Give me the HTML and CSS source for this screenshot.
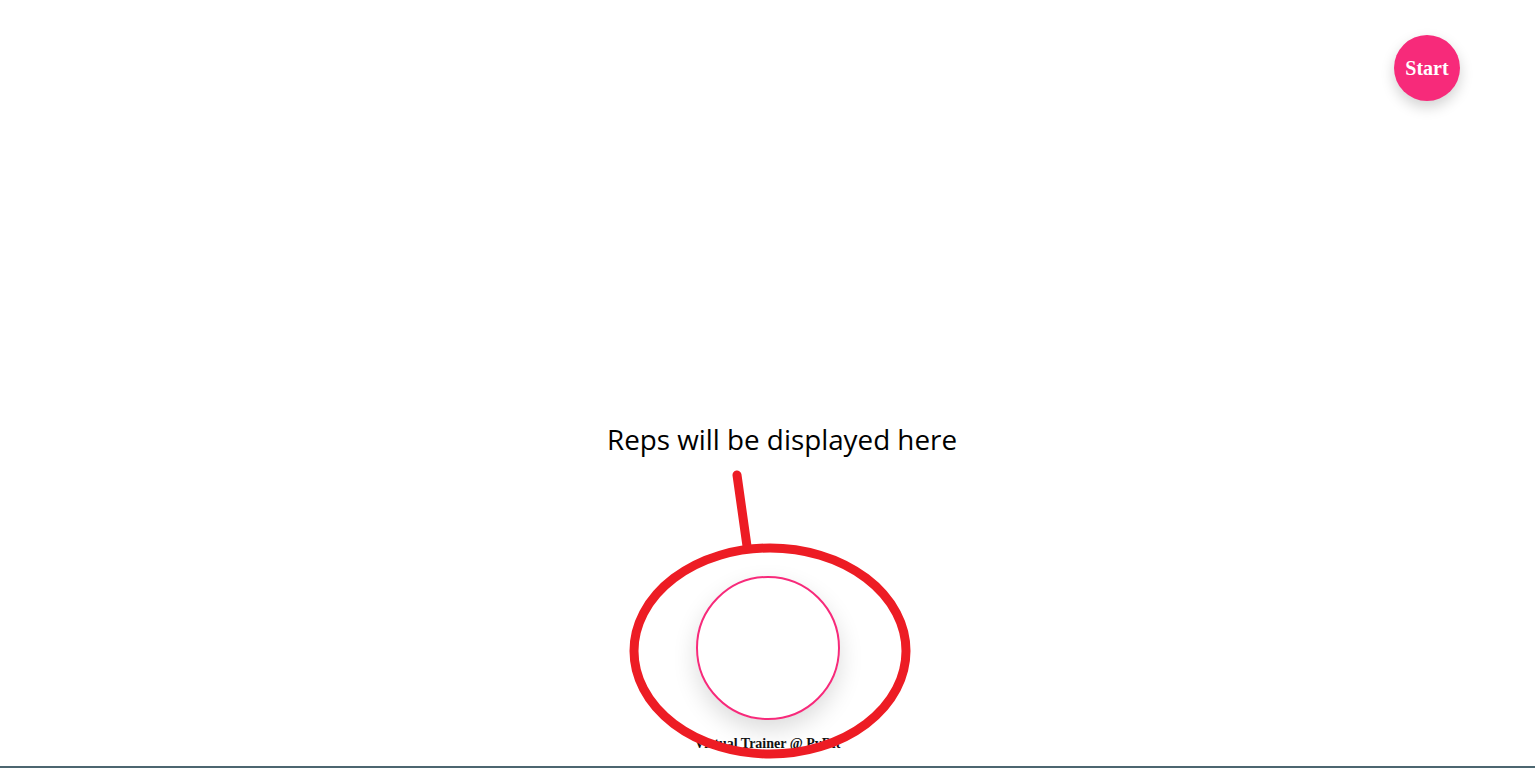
FILE: index.html
```html
<!DOCTYPE html>
<html>
<head>
<meta charset="utf-8">
<title>Virtual Trainer</title>
<link rel="stylesheet" href="styles.css">
</head>
<body>
<div class="page">
  <header class="topbar">
    <button class="start-btn">Start</button>
  </header>
  <main class="center">
    <div class="reps-label">Reps will be displayed here</div>
    <div class="reps-circle"></div>
    <footer class="credit">Virtual Trainer @ PyDit</footer>
  </main>
  <svg class="annotation" width="1535" height="768" viewBox="0 0 1535 768">
    <line x1="737" y1="475" x2="747" y2="546" stroke="#ed1c24" stroke-width="9" stroke-linecap="round"/>
    <ellipse cx="770" cy="651" rx="136" ry="103" fill="none" stroke="#ed1c24" stroke-width="9"/>
  </svg>
</div>
</body>
</html>
```
FILE: styles.css
```css
html, body {
  margin: 0;
  padding: 0;
  background: #ffffff;
}
.page {
  position: relative;
  height: 766px;
  border-bottom: 2px solid #4c6670;
  overflow: hidden;
}
.topbar {
  display: flex;
  justify-content: flex-end;
  padding: 35px 75px 0 0;
}
.start-btn {
  width: 66px;
  height: 66px;
  border-radius: 50%;
  border: none;
  background: #f72a7a;
  color: #ffffff;
  font-family: "Liberation Serif", "Times New Roman", serif;
  font-weight: bold;
  font-size: 20px;
  box-shadow: 0 6px 14px rgba(0,0,0,0.18);
  padding: 0;
}
.center {
  display: flex;
  flex-direction: column;
  align-items: center;
}
.reps-label {
  margin-top: 320px;
  margin-left: 29px;
  font-family: "Open Sans", "Noto Sans", sans-serif;
  font-size: 27.8px;
  line-height: 36px;
  color: #000000;
}
.reps-circle {
  margin-top: 119px;
  width: 140px;
  height: 140px;
  border: 2px solid #f72a7a;
  border-radius: 50%;
  box-shadow: 0 10px 25px rgba(0,0,0,0.14);
}
.credit {
  margin-top: 16px;
  font-family: "Liberation Serif", "Times New Roman", serif;
  font-weight: bold;
  font-size: 14px;
  line-height: 15px;
  color: #111111;
}
.annotation {
  position: absolute;
  left: 0;
  top: 0;
  pointer-events: none;
}
```
